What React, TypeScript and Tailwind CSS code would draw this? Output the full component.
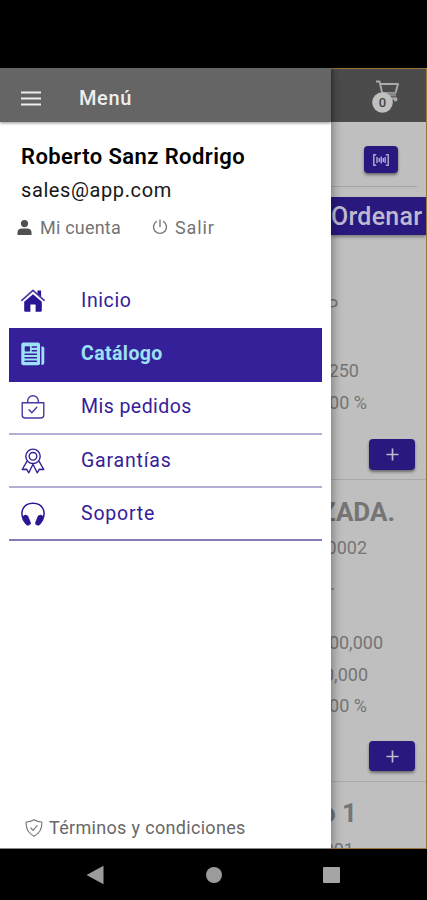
import type { ReactNode } from "react";

type LineProps = { children: ReactNode; className: string };

function Line({ children, className }: LineProps) {
  return (
    <div className={`flex shrink-0 items-center justify-end overflow-hidden whitespace-nowrap text-[#757575] ${className}`}>
      <span className="shrink-0">{children}</span>
    </div>
  );
}

function AddButton({ className }: { className: string }) {
  return (
    <button className={`ml-[38px] flex w-[46px] shrink-0 items-center justify-center rounded-[4px] bg-[#29187d] shadow-[0_2px_3px_rgba(0,0,0,0.45)] ${className}`}>
      <svg className="h-[13px] w-[13px]" viewBox="0 0 13 13" stroke="#bdb9cf" strokeWidth="1.7">
        <path d="M6.5 0.5v12M0.5 6.5h12" />
      </svg>
    </button>
  );
}

function HomeIcon() {
  return (
    <svg className="h-6 w-6" viewBox="0 0 24 24" fill="#2b1594">
      <path d="M12 5.2L3.2 12.800v8.800q0 1.200 1.200 1.200h5v-7.200h5.200v7.200h5q1.200 0 1.200-1.200v-8.800z" />
      <path d="M.8 11.300L12 1.300l11.200 10" fill="none" stroke="#4a38a5" strokeWidth="1.700" strokeLinecap="round" strokeLinejoin="round" />
      <path d="M16.500 1.500h3.600v6.200l-3.600-3.200z" />
    </svg>
  );
}

function NewsIcon() {
  return (
    <svg className="h-6 w-6" viewBox="0 0 24 24">
      <rect x="0.3" y="0.5" width="18.7" height="22.7" rx="2" fill="#9de1f7" />
      <path d="M20.4 4.5h1.300q1.600 0 1.600 1.600v14.500q0 2.500-2.900 2.500z" fill="#9de1f7" />
      <rect x="3.7" y="4.2" width="5.3" height="5.3" rx="0.8" fill="#35209a" />
      <path d="M11.200 5h4.300M11.200 8.700h4.300M4 12.300h11.500M4 15.800h11.500M4 19.200h11.500" stroke="#35209a" strokeWidth="1.4" strokeLinecap="round" />
    </svg>
  );
}

function BagIcon() {
  return (
    <svg className="h-6 w-6" viewBox="0 0 24 24" fill="none" stroke="#4a38a5" strokeWidth="1.4" strokeLinecap="round" strokeLinejoin="round">
      <path d="M1.200 7.700h21.600v12.200q0 3.100-3.100 3.100H4.300q-3.100 0-3.100-3.100z" />
      <path d="M6.700 7.500V6a5.300 5.300 0 0 1 10.600 0v1.500M8 14.800l2.800 3 5-5.600" />
    </svg>
  );
}

function RibbonIcon() {
  return (
    <svg className="h-[26px] w-6" viewBox="0 0 24 26" fill="none" stroke="#35209a" strokeWidth="1.4" strokeLinejoin="round">
      <circle cx="12" cy="8.300" r="7.200" />
      <circle cx="12" cy="8.300" r="3.800" />
      <path d="M6.200 12.800L1.200 21.500l4.400-.3 2.200 3.600 4.200-8.500 4.200 8.500 2.200-3.600 4.400.3-5-8.700M12 16.300v-.8" />
    </svg>
  );
}

function HeadphonesIcon() {
  return (
    <svg className="h-6 w-6" viewBox="0 0 24 24" fill="none" stroke="#2b1594" strokeLinecap="round" strokeLinejoin="round">
      <path d="M3 18C-1.500 11 1.500 1.200 12 1.200S25.500 11 21 18" strokeWidth="1.500" />
      <path d="M1.800 14.500q2.800-2.600 5-.4l2.700 6.700q.3 1.800-1.700 2.300-2 .4-3.200-1.200L2 18zM22.200 14.500q-2.800-2.600-5-.4l-2.700 6.700q-.3 1.800 1.700 2.300 2 .4 3.200-1.200L22 18z" fill="#2b1594" strokeWidth="0.7" />
    </svg>
  );
}

const items = [
  { label: "Inicio", icon: <HomeIcon />, row: "border-transparent text-[#35209a]", text: "tracking-[0.6px]" },
  { label: "Catálogo", icon: <NewsIcon />, row: "border-[#35209a] bg-[#35209a] text-[#9de1f7]", text: "font-bold tracking-[0.4px]" },
  { label: "Mis pedidos", icon: <BagIcon />, row: "border-[#b5aed4] text-[#35209a]", text: "tracking-[0.45px]" },
  { label: "Garantías", icon: <RibbonIcon />, row: "border-[#b5aed4] text-[#35209a]", text: "tracking-[0.8px]" },
  { label: "Soporte", icon: <HeadphonesIcon />, row: "border-[#867cb8] text-[#35209a]", text: "tracking-[0.8px]" },
];

function Drawer() {
  return (
    <aside className="z-10 flex w-[331px] shrink-0 flex-col bg-white shadow-[1px_0_10px_rgba(0,0,0,0.4)]">
      <header className="flex h-[54px] shrink-0 items-center bg-[#656565] pt-1.5 pl-[21px] shadow-[0_1px_3px_rgba(0,0,0,0.45)]">
        <svg className="h-[15px] w-5" viewBox="0 0 20 15" stroke="#ededed" strokeWidth="2.1">
          <path d="M0 1.500h20M0 7.500h20M0 13.500h20" />
        </svg>
        <h1 className="ml-[38px] text-[20px] leading-6 font-medium tracking-[0.6px] text-[#ededed]">Menú</h1>
      </header>

      <div className="h-[142px] shrink-0 pt-[21px] pl-[21px]">
        <p className="h-[31px] text-[22px] leading-[28px] font-semibold tracking-[0.42px] whitespace-nowrap text-black">Roberto Sanz Rodrigo</p>
        <p className="h-[36px] text-[20px] leading-[33px] tracking-[0.6px] text-[#171717]">sales@app.com</p>
        <div className="-ml-1 flex h-[34px] items-center text-[18px] text-[#747474]">
          <svg className="h-[15px] w-[15px]" viewBox="0 0 15 15" fill="#505050">
            <circle cx="7.500" cy="3.600" r="3.600" />
            <path d="M.5 15v-2.600q0-4 4.500-4h5q4.500 0 4.500 4V15z" />
          </svg>
          <span className="ml-[8px] w-[112px] tracking-[0.2px]">Mi cuenta</span>
          <svg className="h-4 w-4" viewBox="0 0 16 16" fill="none" stroke="#777" strokeWidth="1.4" strokeLinecap="round">
            <path d="M4.400 2.500a6.500 6.500 0 1 0 7.200 0M8 1v6.500" />
          </svg>
          <span className="ml-[7px] tracking-[0.9px]">Salir</span>
        </div>
      </div>

      <nav className="ml-[9px] w-[313px] pt-[11px]">
        {items.map((item) => (
          <div key={item.label} className={`flex h-[53.3px] items-center border-b-2 pl-3 ${item.row}`}>
            <span className="flex w-[60px] shrink-0 items-center">{item.icon}</span>
            <span className={`text-[19.5px] leading-6 ${item.text}`}>{item.label}</span>
          </div>
        ))}
      </nav>

      <footer className="mt-auto flex h-[43px] items-center border-b border-[#888] pl-[25px] text-[18px] text-[#686868]">
        <svg className="mt-0.5 h-[18px] w-[18px]" viewBox="0 0 18 18" fill="none" stroke="#777" strokeWidth="1.1" strokeLinecap="round" strokeLinejoin="round">
          <path d="M9 .8q3.800 2.300 7.800 2.200C17.300 9.500 15.200 14 9 17.300 2.800 14 .7 9.500 1.200 3 5.200 3.100 9 .8 9 .8z" />
          <path d="M5.800 9l2.300 2.400 4-4.700" />
        </svg>
        <span className="ml-[6px] tracking-[0.32px]">Términos y condiciones</span>
      </footer>
    </aside>
  );
}

function Catalog() {
  return (
    <main className="flex w-24 shrink-0 flex-col overflow-hidden border-t border-r border-b border-[#9b743b] bg-[#bfbfbf]">
      <header className="flex h-[53px] shrink-0 items-center bg-[#4b4b4b] pl-[41px]">
        <svg className="h-[36px] w-[29px]" viewBox="0 0 29 36" fill="none">
          <path d="M4 3.500h3.500l4 17H25M8.300 6H26l-2.500 9H10.200" stroke="#aaa" strokeWidth="1.900" strokeLinejoin="round" />
          <path d="M10 14.500h14v4H11z" fill="#888" />
          <circle cx="23.500" cy="21.500" r="2" fill="#aaa" />
          <circle cx="10.500" cy="24.500" r="10.300" fill="#c0c0c0" />
          <text x="10.500" y="29.200" textAnchor="middle" fontSize="13" fontWeight="500" fill="#454545">0</text>
        </svg>
      </header>
      <div className="h-[64px] shrink-0 pt-6">
        <button className="ml-[33px] flex h-[27px] w-[34px] items-center justify-center rounded-[4px] bg-[#29187d] shadow-[0_2px_3px_rgba(0,0,0,0.45)]">
          <svg className="h-3 w-4" viewBox="0 0 16 12" fill="none" stroke="#aaa2cc" strokeWidth="1.500">
            <path d="M3.200.7H.8v10.600h2.400M12.800.7h2.400v10.600h-2.400M4 3v6M6.300 4v4M8.300 2.500v7M10.300 4v4M12.200 3v6" />
          </svg>
        </button>
      </div>
      <div className="mr-[9px] h-[11px] shrink-0 border-t border-[#a5a5a5]" />
      <div className="flex h-[38px] shrink-0 items-center bg-[#29187d] pt-0.5 text-[25px] font-medium tracking-[0.250px] text-[#bdb9cf] shadow-[0_2px_3px_rgba(0,0,0,0.350)]">
        Ordenar
      </div>

      <section className="flex h-[245px] shrink-0 flex-col border-b border-[#aaa]">
        <Line className="mt-[56px] h-[28px] w-[7px] text-[18px]">P</Line>
        <Line className="mt-9 h-[31px] w-[28px] text-[18px]">250</Line>
        <Line className="h-8 w-[36px] text-[18px]">00 %</Line>
        <AddButton className="mt-[21px] h-[31px]" />
      </section>

      <section className="flex h-[302px] shrink-0 flex-col border-b border-[#aaa] pt-[14px]">
        <Line className="h-9 w-[64px] text-[26px] font-bold">ZADA.</Line>
        <Line className="h-[35px] w-[36px] text-[18px]">0002</Line>
        <Line className="h-9 w-[4px] text-[18px]">.</Line>
        <Line className="mt-[26px] h-[31px] w-[52px] text-[18px]">00,000</Line>
        <Line className="h-8 w-[37px] text-[18px]">0,000</Line>
        <Line className="h-[31px] w-[36px] text-[18px]">00 %</Line>
        <AddButton className="mt-5 h-[30px]" />
      </section>

      <section className="pt-[13px]">
        <Line className="h-9 w-[26px] text-[26px] font-bold">o 1</Line>
        <Line className="h-9 w-[23px] text-[18px]">001</Line>
      </section>
    </main>
  );
}

export default function App() {
  return (
    <div className="flex h-[900px] w-[427px] flex-col overflow-hidden bg-black pt-[68px] font-['Roboto',sans-serif]">
      <div className="flex h-[781px] shrink-0 overflow-hidden">
        <Drawer />
        <Catalog />
      </div>
      <div className="flex h-[51px] items-center pl-[86px]">
        <svg className="h-5 w-[18px]" viewBox="0 0 18 20" fill="#9b9b9b">
          <path d="M.5 10L17.500.8v18.400z" />
        </svg>
        <div className="ml-[102px] h-4 w-4 rounded-full bg-[#9b9b9b]" />
        <div className="ml-[101px] h-4 w-[17px] rounded-[1px] bg-[#a5a5a5]" />
      </div>
    </div>
  );
}
